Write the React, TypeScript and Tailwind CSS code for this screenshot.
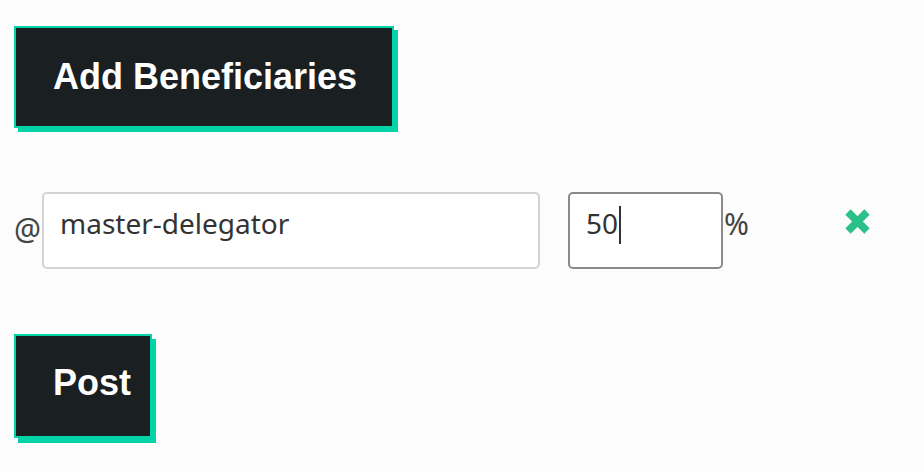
import React from "react";

export default function App() {
  return (
    <div className="w-[924px] h-[472px] bg-[#fcfcfc] overflow-hidden pl-[14px] pt-[26px]">
      <button className="flex items-center h-[102px] w-[380px] pl-[37px] bg-[#1a1f22] border-2 border-[#03d4a8] shadow-[4px_4px_0_#03d4a8] text-white text-[36px] font-bold leading-none [font-family:'Liberation_Sans',Arial,sans-serif]">
        Add Beneficiaries
      </button>
      <div className="flex items-center mt-[64px] h-[77px] [font-family:'Noto_Sans',sans-serif] text-[#333]">
        <span className="text-[30px] w-[28px] text-[#444] pb-[4px] leading-none">@</span>
        <div className="flex items-center w-[498px] h-[77px] border-2 border-[#d3d3d3] rounded-[5px] bg-white pl-[16px] pb-[16px] text-[28px]">
          master-delegator
        </div>
        <div className="ml-[28px] flex items-center w-[155px] h-[77px] border-2 border-[#8a8a8a] rounded-[5px] bg-white pl-[16px] pb-[16px] text-[28px]">
          50<span className="inline-block w-[2px] h-[38px] bg-[#333] ml-[1px] mt-[4px]"></span>
        </div>
        <span className="text-[30px] ml-[1px] text-[#444] pb-[14px] leading-none">%</span>
        <svg className="ml-[95px] mb-[18px]" width="27" height="27" viewBox="0 0 27 27">
          <path d="M4 4 L23 23 M23 4 L4 23" stroke="#2bbf8a" strokeWidth="7.5" strokeLinecap="butt" />
        </svg>
      </div>
      <button className="mt-[65px] flex items-center h-[104px] w-[138px] pl-[37px] pb-[6px] bg-[#1a1f22] border-2 border-[#03d4a8] shadow-[4px_5px_0_#03d4a8] text-white text-[36px] font-bold leading-none [font-family:'Liberation_Sans',Arial,sans-serif]">
        Post
      </button>
    </div>
  );
}
